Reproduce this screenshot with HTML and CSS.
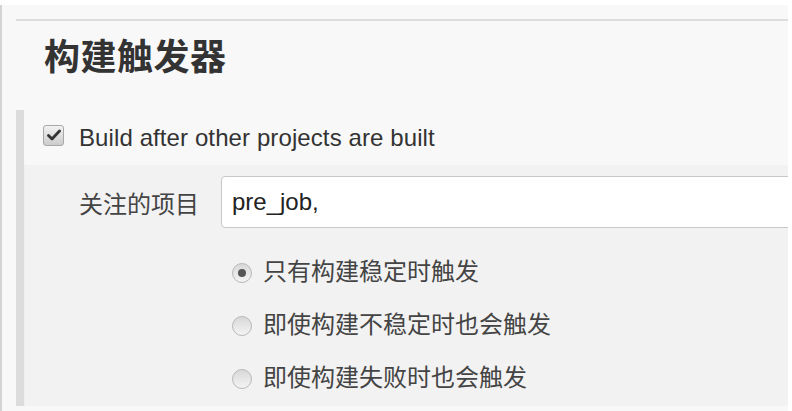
FILE: index.html
```html
<!DOCTYPE html>
<html lang="zh">
<head>
<meta charset="utf-8">
<link rel="stylesheet" href="styles.css">
</head>
<body>
<div class="panel">
  <div class="rule"></div>
  <h2 class="title">构建触发器</h2>
  <div class="section">
    <label class="check-row">
      <span class="checkbox">
        <svg width="14" height="12" viewBox="0 0 14 12"><path d="M1.5 6.5 L5 10 L12.5 2" fill="none" stroke="#333" stroke-width="2.8" stroke-linecap="round" stroke-linejoin="round"/></svg>
      </span>
      <span class="check-label">Build after other projects are built</span>
    </label>
    <div class="nested">
      <div class="field-row">
        <span class="field-label">关注的项目</span>
        <div class="input">pre_job,</div>
      </div>
      <div class="radios">
        <div class="radio-row"><span class="radio checked"></span><span>只有构建稳定时触发</span></div>
        <div class="radio-row"><span class="radio"></span><span>即使构建不稳定时也会触发</span></div>
        <div class="radio-row"><span class="radio"></span><span>即使构建失败时也会触发</span></div>
      </div>
    </div>
  </div>
</div>
</body>
</html>
```

FILE: styles.css
```css
html, body {
  margin: 0;
  padding: 0;
  background: #ffffff;
}
body {
  font-family: "Liberation Sans", "Noto Sans CJK SC", sans-serif;
  color: #333333;
  height: 411px;
  overflow: hidden;
}
.panel {
  margin-top: 5px;
  width: 788px;
  height: 406px;
  background: #f8f8f8;
  border-left: 2px solid #d4d4d4;
  padding: 14px 0 0 14px;
  box-sizing: border-box;
  overflow: hidden;
}
.rule {
  height: 2px;
  background: #dddddd;
}
.title {
  margin: 12px 0 0 28px;
  font-family: "Noto Sans CJK SC", sans-serif;
  font-weight: 700;
  font-size: 36px;
  line-height: 43px;
  color: #333333;
  letter-spacing: 0.5px;
}
.section {
  margin-top: 34px;
  border-left: 8px solid #dcdcdc;
}
.check-row {
  display: flex;
  align-items: center;
  height: 55px;
  padding-left: 19px;
  box-sizing: border-box;
}
.checkbox {
  width: 19px;
  height: 19px;
  border: 1px solid #a8a8a8;
  border-radius: 3px;
  background: linear-gradient(#f2f2f2, #cccccc);
  display: flex;
  align-items: center;
  justify-content: center;
  margin-top: -5px;
  flex: none;
}
.check-label {
  margin-left: 15px;
  font-size: 24px;
  color: #333;
  letter-spacing: 0.1px;
}
.nested {
  background: #f2f2f2;
  height: 241px;
  padding-left: 54px;
  box-sizing: border-box;
  padding-top: 11px;
  border-left: 1px solid #eeeeee;
}
.field-row {
  display: flex;
  align-items: center;
}
.field-label {
  font-family: "Noto Sans CJK SC", sans-serif;
  font-size: 24px;
  width: 142px;
  flex: none;
  color: #444;
}
.input {
  height: 52px;
  width: 600px;
  flex: none;
  box-sizing: border-box;
  border: 1px solid #c8c8c8;
  border-radius: 4px;
  background: #ffffff;
  font-size: 24px;
  line-height: 50px;
  padding-left: 10px;
  color: #222;
}
.radios {
  margin-top: 18px;
  padding-left: 153px;
}
.radio-row {
  display: flex;
  align-items: center;
  height: 53px;
  font-family: "Noto Sans CJK SC", sans-serif;
  font-size: 24px;
  color: #444;
}
.radio-row span:last-child {
  margin-top: -6px;
}
.radio {
  width: 18px;
  height: 18px;
  border: 1px solid #b8b8b8;
  border-radius: 50%;
  background: linear-gradient(#d8d8d8, #f4f4f4);
  margin-right: 11px;
  flex: none;
  display: flex;
  align-items: center;
  justify-content: center;
}
.radio.checked::after {
  content: "";
  width: 8px;
  height: 8px;
  border-radius: 50%;
  background: #555555;
}
```
